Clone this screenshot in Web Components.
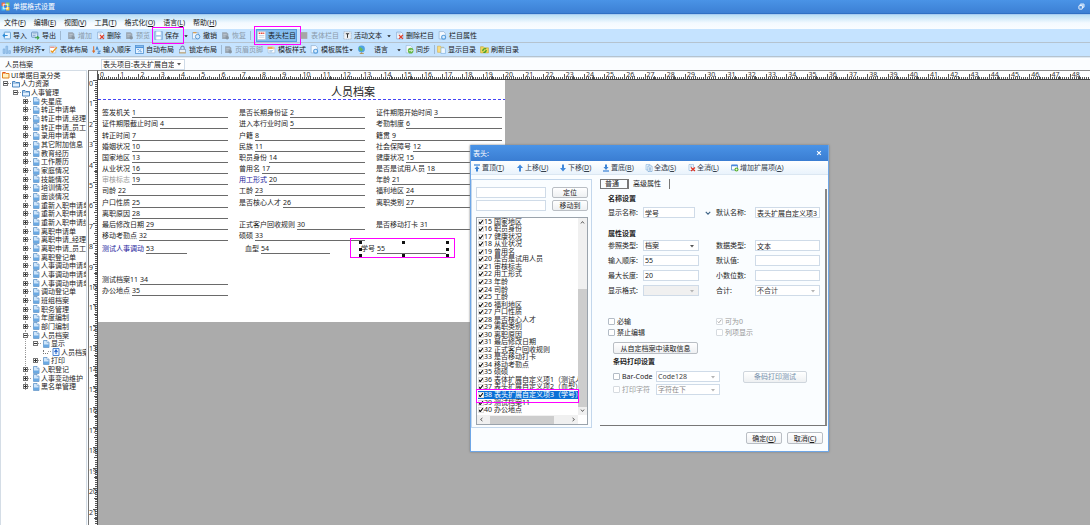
<!DOCTYPE html>
<html lang="zh-CN">
<head>
<meta charset="utf-8">
<title>单据格式设置</title>
<style>
html,body{margin:0;height:100%;overflow:hidden}
body{font:7px/9px "Noto Sans","Noto Sans CJK SC",sans-serif;color:#1c1c1c;background:#fbfdff}
</style>
</head>
<body>
<format-designer></format-designer>
<script>
const ICONS = {
  app:'<path d="M1 1h6v6H1z" fill="#f26a3d"/><path d="M9 1h6v6H9z" fill="#8fd14f"/><path d="M1 9h6v6H1z" fill="#45c2f5"/><path d="M9 9h6v6H9z" fill="#ffc928"/><path d="M4 4h8v8H4z" fill="none" stroke="#fff" stroke-width="1.5"/>',
  restore:'<rect x="5" y="2" width="9" height="8" rx="1" fill="#9cc7f5" stroke="#fff" stroke-width="1.5"/><rect x="2" y="6" width="8" height="8" rx="1" fill="#4a8fe0" stroke="#fff" stroke-width="2"/>',
  imp:'<rect x="4" y="2" width="11" height="12" rx="1" fill="#eaf5ff" stroke="#5d9bd0" stroke-width="1.5"/><path d="M10 8H2m3-3L2 8l3 3" fill="none" stroke="#2b8bd6" stroke-width="2"/>',
  exp:'<rect x="1" y="2" width="11" height="9" rx="1" fill="#dcecfb" stroke="#5b87b8" stroke-width="1.5"/><path d="M3 5h7M3 8h5" stroke="#5b87b8"/><path d="M7 12h7m-3-3 3 3-3 3" fill="none" stroke="#3fa53f" stroke-width="2"/>',
  gray:'<path d="M2 2h8l3 3v9H2z" fill="#9aa6b2"/><path d="M4 6h6M4 9h4" stroke="#d5dde5"/><circle cx="11" cy="12" r="3" fill="#8894a0"/>',
  block:'<path d="M1 2h12v12H1z" fill="#a6a6a6"/>',
  del:'<path d="M3 2h8l3 3v9H3z" fill="#f7fbff" stroke="#7ba3cc" stroke-width="1.2"/><path d="M7 7l7 7m0-7-7 7" stroke="#e0402d" stroke-width="2.2"/><path d="M5 5h5" stroke="#8eb3d8"/>',
  save:'<path d="M1 1h14v14H1z" fill="#a9cbee" stroke="#6e9ecf"/><path d="M4 1h8v6H4zM4 10h8v5H4z" fill="#fff"/>',
  undo:'<rect x="1" y="3" width="10" height="11" fill="#eef6ff" stroke="#8bb4dc" stroke-width="1.5"/><circle cx="10" cy="10" r="4" fill="#d9ebfb" stroke="#4b90d0" stroke-width="1.5"/><path d="M2 3h6" stroke="#e39a3b" stroke-width="2"/>',
  head:'<rect x="1" y="1" width="14" height="14" fill="#fff" stroke="#b9c6d4"/><path d="M3 4h10" stroke="#e64b3c" stroke-width="2.5" stroke-dasharray="3 1"/><path d="M3 8h10M3 11h10" stroke="#9bb3cb"/>',
  text:'<rect x="1.500" y="1.500" width="13" height="13" fill="#eef2f6" stroke="#8d99a5" stroke-dasharray="2 1"/><path d="M5 5h6M8 5v7" stroke="#333" stroke-width="1.8"/>',
  prop:'<path d="M2 1h8l3 3v10H2z" fill="#f4f9ff" stroke="#8badd0" stroke-width="1.2"/><circle cx="10" cy="11" r="3.500" fill="#dbeeff" stroke="#5a9fdc" stroke-width="2"/>',
  align:'<path d="M2 15V7h3v8zM7 15V2h3v13zM12 15v-5h3v5z" fill="#a6cdf0" stroke="#6ea3d6"/>',
  layout:'<path d="M1 2h11v12H1z" fill="#fff" stroke="#93a9c0"/><path d="M3 10l3 3 8-9" fill="none" stroke="#e99a27" stroke-width="2.4"/><path d="M2 4h8" stroke="#e05c4b" stroke-width="1.5"/>',
  order:'<path d="M3 2v11m-2-3 2 3 2-3" fill="none" stroke="#d96e2e" stroke-width="1.8"/><path d="M7 9l2-6 2 6M8 7h3M10 11h5l-5 4h5" fill="none" stroke="#3c7fc2" stroke-width="1.5"/>',
  auto:'<rect x="1" y="1" width="14" height="14" fill="#e5f2ff" stroke="#5895d2" stroke-width="1.5"/><path d="M1 4h14" stroke="#4a92dc" stroke-width="3"/><path d="M6 12l5-4M4 8h3M9 12h3" stroke="#4a92dc" stroke-width="1.5"/>',
  lock:'<path d="M5 8V5a3 3 0 0 1 6 0v3" fill="none" stroke="#6f8db0" stroke-width="1.8"/><rect x="3" y="8" width="10" height="6" fill="#e8f0f8" stroke="#6f8db0"/><path d="M2 14h12" stroke="#d4a04b" stroke-width="1.5"/>',
  style:'<path d="M2 6h12v8H2z" fill="#fff" stroke="#9ab3cc"/><path d="M1 3h9v4H1z" fill="#f0a850"/><path d="M9 2l5 2-2 5" fill="#f6ce8c"/><path d="M4 10h7M4 12h5" stroke="#6da2d7"/>',
  globe:'<circle cx="8" cy="7" r="6" fill="#4fa2e3"/><path d="M4 3c3 0 3 2 5 3s2 3-1 5C5 10 3 7 4 3z" fill="#68bb5a"/><path d="M5 15h7M8 13v2" stroke="#b08a4d" stroke-width="1.6"/>',
  sync:'<path d="M2 1h8l3 3v10H2z" fill="#f4f9ff" stroke="#8badd0"/><circle cx="10" cy="10" r="5" fill="#66b848"/><path d="M7 10h6m-2-2 2 2-2 2" stroke="#fff" stroke-width="1.3" fill="none"/>',
  dir:'<path d="M1 2h5l1 2h5v9H1z" fill="#f9dd82" stroke="#d3aa44"/><path d="M7 5h6l2 2v8H7z" fill="#eef7ff" stroke="#6fa5da"/>',
  fresh:'<path d="M1 3h5l2 2h7v9H1z" fill="#f2d65c" stroke="#c2a22f"/><path d="M5 11a4 4 0 0 1 6-4M11 9a4 4 0 0 1-5 4" fill="none" stroke="#43a12e" stroke-width="2.5"/>',
  root:'<path d="M1 3h5l2 2h6v9H1z" fill="#fff3c6" stroke="#e08320" stroke-width="2"/><path d="M2 2h5v3H2z" fill="#e8521e"/>',
  folder:'<path d="M1 3h5l2 2h7v9H1z" fill="#e2f1ff" stroke="#3f7dbb" stroke-width="1.8"/><path d="M1 6h14" stroke="#3f7dbb" stroke-width="1.500"/>',
  doc:'<path d="M3 1h7l4 4v10H3z" fill="#cfe6fb" stroke="#5a8fc4" stroke-width="1.5"/><path d="M10 1v4h4" fill="#fff" stroke="#5a8fc4"/><path d="M3 9h11v5H3z" fill="#6ba9e2"/>',
  page:'<path d="M2 1h12v14H2z" fill="#f0f7ff" stroke="#3a78d0" stroke-width="1.8"/><path d="M8 12V5M5 8l3-4 3 4" fill="none" stroke="#2563c9" stroke-width="2.2"/>',
  top:'<path d="M2 2h12" stroke="#3d84d6" stroke-width="2.500"/><path d="M8 4l5 6h-3v5H6v-5H3z" fill="#3d84d6"/>',
  up:'<path d="M8 1l6 7h-4v7H6V8H2z" fill="#4189dc"/>',
  down:'<path d="M8 15l6-7h-4V1H6v7H2z" fill="#4189dc"/>',
  bottom:'<path d="M2 14h12" stroke="#3d84d6" stroke-width="2.500"/><path d="M8 12l5-6h-3V1H6v5H3z" fill="#3d84d6"/>',
  all:'<path d="M2 1h8v11H2z" fill="#e4f1fd" stroke="#7aa9d6"/><path d="M6 4h8v11H6z" fill="#fff" stroke="#4f8bc7"/><path d="M8 8h4M10 7v6M8 12h4" stroke="#3b7cc0"/>',
  none:'<path d="M2 1h9v12H2z" fill="#fff" stroke="#6f9fce"/><path d="M4 4h5M4 6h4" stroke="#6f9fce"/><path d="M6 7l8 7m0-7-8 7" stroke="#e03424" stroke-width="2.500"/>',
  add:'<path d="M1 2h12v10H1z" fill="#fff" stroke="#4a88c5" stroke-width="1.5"/><path d="M1 3h12" stroke="#4a88e0" stroke-width="3"/><circle cx="11" cy="11" r="4" fill="#5cb231"/><path d="M11 9v4M9 11h4" stroke="#fff" stroke-width="1.3"/>',
  close:'<path d="M3 3l10 10M13 3L3 13" stroke="#fff" stroke-width="2.8"/>',
  chev:'<path d="M2 5l6 6 6-6" fill="none" stroke="#3f6486" stroke-width="3"/>',
  cup:'<path d="M3 11l5-6 5 6" fill="none" stroke="#333" stroke-width="2.5"/>',
  cdown:'<path d="M3 5l5 6 5-6" fill="none" stroke="#333" stroke-width="2.5"/>',
  cleft:'<path d="M11 3L5 8l6 5" fill="none" stroke="#333" stroke-width="2.5"/>',
  cright:'<path d="M5 3l6 5-6 5" fill="none" stroke="#333" stroke-width="2.5"/>',
  tri:'<path d="M1 5h14l-7 8z" fill="currentColor"/>'
};
function define(name, css, body) {
  customElements.define(name, class extends HTMLElement {
    constructor() { super(); this.attachShadow({mode:'open'}); }
    connectedCallback() {
      this.shadowRoot.innerHTML = '<style>*{box-sizing:border-box}' + css + '</style>' + (typeof body === 'function' ? body(this) : body);
    }
  });
}
const key = t => t.replace(/\((\w)\)/, '(<u>$1</u>)');

define('app-icon', ':host{display:block;flex:none;width:9px;height:9px}svg{display:block;width:100%;height:100%}',
  e => `<svg viewBox="0 0 16 16" aria-hidden="true">${ICONS[e.getAttribute('name')]}</svg>`);

define('title-bar', `:host{display:flex;align-items:center;gap:3px;height:15px;padding:0 5px 2px 1px;color:#fff;background:linear-gradient(#4a93e6,#3c80d4 13px,#2f70c4 13px,#2f70c4 14px,#a9cdf0 14px)}
  h1{margin:0;flex:1;font:inherit}button{all:unset;display:block}app-icon{height:9px}button app-icon{width:7px;height:7px}`,
  `<app-icon name="app"></app-icon><h1><slot></slot></h1><button aria-label="还原"><app-icon name="restore"></app-icon></button>`);

define('menu-bar', `:host{display:flex;gap:8px;align-items:center;height:14px;padding-left:4px;background:linear-gradient(#b9dff5,#f4faff 8px,#fafdff)}
  button{all:unset;white-space:nowrap}`,
  () => ['文件(F)','编辑(E)','视图(V)','工具(T)','格式化(O)','语言(L)','帮助(H)'].map(t => `<button>${key(t)}</button>`).join(''));

define('tool-bar', `:host{display:flex;align-items:center;gap:4px;height:14px;padding-left:2px;background:#c5e3ff;border-bottom:1px solid #b5c3cf}`, '<slot></slot>');
define('tool-sep', `:host{display:block;flex:none;width:var(--sep);height:9px;margin-right:-4px;border-left:1px solid #9fb9d2}`, '');
define('tool-item', `:host{display:block;flex:none;position:relative}
  button{all:unset;display:flex;align-items:center;gap:2px;height:11px;white-space:nowrap;color:#1c1c1c}
  :host([off]) button{color:#8b9aa9}
  :host([pressed]) button{background:#84bdf0;box-shadow:0 0 0 1px #5d9fdf}
  .drop{width:4px;height:4px;margin-left:-2px}
  :host([drop=wide]) .drop{margin-left:3px}
  :host([wide]) span{padding:0 4px 0 6px}
  :host([marked])::after{content:"";position:absolute;inset:-3px -4px -3px -2px;border:1px solid #f0f}
  :host([marked][drop])::after{right:4px}
  :host([marked][pressed])::after{inset:-4px -5px -4px -3px}`,
  e => `<button><app-icon name="${e.getAttribute('icon')}"></app-icon><span><slot></slot></span>${e.hasAttribute('drop') ? '<app-icon class="drop" name="tri"></app-icon>' : ''}</button>`);

const SEL_ARROW = c => `url("data:image/svg+xml,%3Csvg xmlns='http://www.w3.org/2000/svg' viewBox='0 0 8 8'%3E%3Cpath d='M0 2h8L4 7z' fill='%23${c}'/%3E%3C/svg%3E")`;
const CONTROLS = `
  input:not([type=checkbox]),select{box-sizing:border-box;width:100%;height:11px;margin:0;padding:0 1px;border:1px solid #cfdbe8;border-radius:0;background:#fff;font:inherit;color:#222;outline:0;display:block}
  select{appearance:none;padding:0 10px 0 1px;background:${SEL_ARROW('555')} right 4px center/4px 4px no-repeat #fff;text-overflow:clip}
  select:disabled{opacity:1;color:#444;background-image:${SEL_ARROW('b4b4b4')}}
  input[type=checkbox]{appearance:none;flex:none;width:7px;height:7px;margin:0;border:1px solid #b3bcc6;border-radius:1px;background:#fff}
  input[type=checkbox]:disabled{border-color:#d6dbe0}
  button{box-sizing:border-box;height:12px;padding:0;margin:0;border:1px solid #b9bec4;border-radius:2px;background:linear-gradient(#fff,#eef0f2);font:inherit;line-height:9px;color:#1c1c1c;white-space:nowrap}
  button:disabled{color:#7590ab;border-color:#cfd6dd}`;

define('context-bar', `:host{display:flex;align-items:center;height:13px;border-top:1px solid #dfe9f2;background:#fbfdff}
  label{width:101px;padding-left:5px}${CONTROLS}select{width:84px;background-position:right 3px center}`,
  `<label for="s">人员档案</label><select id="s"><option>表头项目:表头扩展自定</option></select>`);

const TREE = [[0,'root','UI单据目录分类'],[1,'folder','人力资源','-'],[2,'folder','人事管理','-']]
  .concat('失星底|转正申请单|转正申请_经理|转正申请_员工|录用申请单|其它附加信息|教育经历|工作履历|家庭情况|技能情况|培训情况|面谈情况|重新入职申请单|重新入职申请单|重新入职申请结|离职申请单|离职申请_经理|离职申请_员工|离职登记单|人事调动申请单|人事调动申请单|人事调动申请单|调动登记单|班组档案|职务管理|年度编制|部门编制'.split('|').map(t => [3,'doc',t,'+']))
  .concat([[3,'doc','人员档案','-'],[4,'doc','显示','-'],[5,'page','人员档案'],[4,'doc','打印','+'],[3,'doc','入职登记','+'],[3,'doc','人事变动维护','+'],[3,'doc','黑名单管理','+']]);
define('catalog-tree', `:host{display:block;overflow:hidden;background:#fff;border:1px solid #d4dde6;border-width:1px 1px 0 1px}
  ul{list-style:none;margin:0;padding:0;height:320px;display:flex;flex-direction:column}
  li{flex:1 0 0;min-height:0;display:flex;align-items:center;white-space:nowrap;padding-left:calc(var(--d)*10px - 8px);gap:1px}
  li.root{padding-left:1px}li.root .box{display:none}
  li.guide{background:repeating-linear-gradient(#999 0 1px,transparent 1px 2px) 24px 0/1px 100% no-repeat}
  .box{flex:none;width:5px;height:5px;border:1px solid #777;background:linear-gradient(#333,#333) center/3px 1px no-repeat #fff;position:relative;margin-right:3px}
  .plus{background:linear-gradient(#333,#333) center/3px 1px no-repeat,linear-gradient(#333,#333) center/1px 3px no-repeat #fff}
  .box::after{content:"";position:absolute;left:4px;top:1px;width:3px;border-top:1px dotted #999}
  .leaf{border-width:0 0 1px 1px;border-style:dotted;background:none;height:4px}
  app-icon{width:8px;height:8px}`,
  () => `<ul>${TREE.map(([d,i,t,s]) => `<li style="--d:${d}" class="${d ? '' : 'root'} ${d > 2 ? 'guide' : ''}"><span class="box ${s === '+' ? 'plus' : s ? '' : 'leaf'}"></span><app-icon name="${i}"></app-icon><span>${t}</span></li>`).join('')}</ul>`);

define('scale-ruler', `:host{display:grid;background:#fff;color:#333;overflow:hidden;line-height:8px}
  :host([dir=x]){height:10px;grid-template-columns:repeat(49,1fr);border-top:1px solid #8c8c8c;border-bottom:1px solid #444}
  :host([dir=y]){width:9px;margin-bottom:-4px;grid-template-rows:repeat(22,1fr);border-right:1px solid #444}
  span{overflow:visible;white-space:nowrap;font-size:7px}
  :host([dir=x]) span{padding-left:2px;background:linear-gradient(#555,#555) 0 100%/1px 5px no-repeat,linear-gradient(#555,#555) 50% 100%/1px 3px no-repeat,repeating-linear-gradient(90deg,#555 0 1px,transparent 1px 10%) 0 100%/100% 2px no-repeat}
  :host([dir=y]) span{background:linear-gradient(#555,#555) 100% 0/4px 1px no-repeat,linear-gradient(#555,#555) 100% 50%/3px 1px no-repeat,repeating-linear-gradient(#555 0 1px,transparent 1px 10%) 100% 0/2px 100% no-repeat}`,
  e => Array.from({length: e.getAttribute('dir') === 'x' ? 49 : 22}, (_, i) => `<span>${i}</span>`).join(''));

define('form-field', `:host{display:flex;align-items:flex-end;gap:2px;position:relative;min-height:0;white-space:nowrap}
  .v{flex:1;border-bottom:1px solid #6a6a6a;line-height:9px;color:#222}
  .l{padding-bottom:1px}
  :host([tone=blue]) .l{color:#1c1c9c}:host([tone=gray]) .l{color:#999}
  i{display:none}
  :host([selected]) i{display:block;position:absolute;width:3px;height:3px;background:#111}
  :host([selected])::after{content:"";position:absolute;inset:-6px -9px -4px -11px;border:1px solid #f0f}
  i:nth-of-type(3n+1){left:-2px}i:nth-of-type(3n+2){left:41px}i:nth-of-type(3n){right:-3px}
  i:nth-of-type(-n+3){top:-3px}i:nth-of-type(n+4){top:4px}i:nth-of-type(n+7){bottom:-3px;top:auto}
  i:nth-of-type(5){visibility:hidden}`,
  e => `<span class="l"><slot></slot></span><span class="v">${e.getAttribute('no')}</span>` + (e.hasAttribute('selected') ? '<i></i>'.repeat(9) : ''));

const F = (t, n, x = '') => `<form-field no="${n}" ${x}>${t}</form-field>`;
const ROWS = ['签发机关','是否长期身份证','证件期限开始时间','证件期限截止时间','进入本行业时间','考勤制度','转正时间','户籍','籍贯','婚姻状况','民族','社会保障号','国家地区','职员身份','健康状况','从业状况','曾用名','是否是试用人员','审核标志','用工形式','年龄','司龄','工龄','福利地区','户口性质','是否核心人才','离职类别','离职原因'];
define('form-page', `:host{display:block;width:407px;padding-bottom:26px;background:#fff}
  h2{margin:0 0 7px;height:20px;padding:2px 0 0 233px;font:11px/18px "Noto Sans CJK SC",sans-serif;color:#222;background:repeating-linear-gradient(90deg,#4444f4 0 3px,#fff 3px 5px) 0 100%/100% 1px no-repeat}
  .g{display:grid;grid-template-columns:repeat(3,126px);column-gap:11px;grid-template-rows:repeat(12,1fr);height:134px;padding-left:4px}
  .m{display:grid;grid-template-columns:143px 116px 85px;height:10px;margin:3px 0 20px;padding-left:4px}
  .m form-field{width:85px}
  .e{display:grid;grid-template-columns:126px;grid-auto-rows:11px;padding-left:4px}`,
  () => `<h2>人员档案</h2><div class="g">${ROWS.map((t,i) => F(t, i + 1, t === '审核标志' ? 'tone="gray"' : t === '用工形式' ? 'tone="blue"' : '')).join('')}<span></span><span></span>${F('最后修改日期',29)}${F('正式客户回收规则',30)}${F('是否移动打卡',31)}${F('移动考勤点',32)}${F('硕硕',33)}</div>
  <div class="m">${F('测试人事调动',53,'tone="blue"')}${F('血型',54)}${F('学号',55,'selected')}</div>
  <div class="e">${F('测试档案11',34)}${F('办公地点',35)}</div>`);

const CHECK = `url("data:image/svg+xml,%3Csvg xmlns='http://www.w3.org/2000/svg' viewBox='0 0 8 8'%3E%3Cpath d='M1 4l2 2 4-5' fill='none' stroke='%23111' stroke-width='1.6'/%3E%3C/svg%3E")`;
const ITEMS = '国家地区|职员身份|健康状况|从业状况|曾用名|是否是试用人员|审核标志|用工形式|年龄|司龄|工龄|福利地区|户口性质|是否核心人才|离职类别|离职原因|最后修改日期|正式客户回收规则|是否移动打卡|移动考勤点|硕硕|表体扩展自定义项1（测试人事）|表头扩展自定义项2（血型）|表头扩展自定义项3（学号）|测试档案11|办公地点'.split('|');
define('item-list', `:host{display:grid;grid-template-columns:1fr 9px;grid-template-rows:197px 9px;border:1px solid #9aa3ac;background:#fff}
  ul{list-style:none;margin:0;padding:0 0 1px 1px;display:flex;flex-direction:column;min-width:0;overflow:hidden}
  li{flex:1 0 0;min-height:0;display:flex;align-items:center}
  label{display:flex;align-items:center;white-space:nowrap;line-height:8px}
  input{appearance:none;flex:none;width:6px;height:6px;margin:0;background:${CHECK} center/6px 6px no-repeat,#fff;outline:1px solid #ddd;outline-offset:-1px}
  .n{flex:none;width:10px}
  .on label{background:#0a6fd6;color:#fff}
  .wrap{position:relative;min-width:0;display:grid}
  .wrap::after{content:"";position:absolute;left:-1px;right:-1px;top:171px;height:12px;border:1px solid #f0f}
  .v,.h{background:#f0f0f0;display:flex;align-items:center;justify-content:space-between}
  .v{flex-direction:column;padding:2px 0}.h{padding:0 2px}
  .v::after{content:"";order:1;width:9px;height:118px;background:#cdcdcd;margin-top:62px}.v app-icon:last-of-type{order:2}
  .h::after{content:"";order:1;width:64px;height:8px;background:#cdcdcd;margin-right:12px}.h app-icon:last-of-type{order:2}
  .v app-icon,.h app-icon{width:5px;height:5px}`,
  () => `<div class="wrap"><ul>${ITEMS.map((t,i) => `<li class="${i === 23 ? 'on' : ''}"><label><input type="checkbox" checked><span class="n">${i + 15}</span><span>${t}</span></label></li>`).join('')}</ul></div>
  <div class="v"><app-icon name="cup"></app-icon><app-icon name="cdown"></app-icon></div><div class="h"><app-icon name="cleft"></app-icon><app-icon name="cright"></app-icon></div>`);

define('find-pane', `:host{display:block;width:121px;padding:7px 3px 2px 4px;border:1px solid #c3d7ec}${CONTROLS}
  .r{display:grid;grid-template-columns:70px 36px;justify-content:space-between;gap:2px;margin-bottom:6px}button{height:11px}`,
  `<div class="r"><input aria-label="定位"><button>定位</button><input aria-label="移动到"><button>移动到</button></div><item-list></item-list>`);

define('attribute-pane', `:host{display:block;color:#1c1c1c}${CONTROLS}
  nav{display:flex;height:10px}nav button{height:10px;border:0;border-radius:0;background:none;border-right:1px solid #777;width:41px;line-height:8px;text-align:left;padding-left:4px}
  nav button:first-child{width:29px;border:1px solid #777;border-right-width:2px;padding-left:4px}
  .p{height:237px;padding:4px 0 0 8px;border-right:2px solid #888;border-bottom:1px solid #777}
  h3{margin:0;font:bold 7px/11px "Noto Sans","Noto Sans CJK SC",sans-serif}
  .f{display:grid;grid-template-columns:35px 56px 17px 39px 65px;grid-auto-rows:11px;row-gap:4px;align-items:center}
  .f.a{margin:3px 0 10px}.f.a input#n{width:52px}.f.b{margin:1px 0 20px}
  .f app-icon{width:6px;height:6px;justify-self:center}
  #fmt{background-color:#f0f0f0}
  .c{display:grid;grid-template-columns:108px 1fr;grid-auto-rows:11px}
  .c label,.k label{display:flex;align-items:center;gap:2px;white-space:nowrap}
  .off{color:#999}.off input{background:${CHECK.replace('%23111','%23aaa')} center/5px 5px no-repeat,#fff}.off .un{background:#fff!important}
  .in{margin:4px 0 0 5px}.in>button{width:85px;display:block;margin-bottom:2px}
  .k{display:grid;grid-template-columns:43px 64px 87px;row-gap:2px;margin-top:4px;grid-auto-rows:11px;align-items:center}
  .k button{margin-left:23px}.k .dim{color:#888}`,
  `<nav><button>普通</button><button>高级属性</button></nav><div class="p">
  <h3>名称设置</h3><div class="f a"><label for="n">显示名称:</label><input id="n" value="学号"><app-icon name="chev"></app-icon><label for="m">默认名称:</label><input id="m" value="表头扩展自定义项3"></div>
  <h3>属性设置</h3><div class="f b">
  <label for="t">参照类型:</label><select id="t"><option>档案</option></select><span></span><label for="d">数据类型:</label><input id="d" value="文本">
  <label for="o">输入顺序:</label><input id="o" value="55"><span></span><label for="v">默认值:</label><input id="v">
  <label for="l">最大长度:</label><input id="l" value="20"><span></span><label for="x">小数位数:</label><input id="x">
  <label for="fmt">显示格式:</label><select id="fmt" disabled><option></option></select><span></span><label for="s">合计:</label><select id="s" disabled><option>不合计</option></select></div>
  <div class="c"><label><input type="checkbox">必输</label><label class="off"><input type="checkbox" checked disabled>可为0</label><label><input type="checkbox">禁止编辑</label><label class="off"><input class="un" type="checkbox" disabled>列项显示</label></div>
  <div class="in"><button>从自定档案中读取信息</button><h3>条码打印设置</h3><div class="k"><label><input type="checkbox">Bar-Code</label><select aria-label="条码类型" disabled><option>Code128</option></select><button disabled>条码打印测试</button><label class="off"><input class="un" type="checkbox" disabled>打印字符</label><select class="dim" aria-label="字符位置" disabled><option>字符在下</option></select></div></div></div>`);

define('header-dialog', `:host{display:block;width:359px;border:1px solid #6ea6e6;border-top:0;background:#fafdff;box-shadow:0 0 2px #777}
  header{display:flex;align-items:center;justify-content:space-between;height:16px;padding:0 6px 0 2px;color:#fff;background:linear-gradient(#4a93e6,#3a7dd2)}
  header button{all:unset;display:block}header app-icon{width:6px;height:6px}
  .t{display:grid;grid-template-columns:repeat(6,43px) 60px;align-items:center;height:14px;padding-left:2px;background:linear-gradient(#fff,#e9f3fc);border-bottom:1px solid #dbe7f2;color:#34404d}
  .t button{all:unset;display:flex;align-items:center;gap:1px;white-space:nowrap}.t app-icon{width:8px;height:8px}
  main{display:grid;grid-template-columns:121px 227px;column-gap:8px;padding-top:4px}
  footer{display:flex;justify-content:flex-end;gap:5px;padding:4px 5px 7px}${CONTROLS.slice(CONTROLS.indexOf('button{')).replace(/^button\{/,'footer button{width:36px;')}`,
  () => `<header><span>表头:</span><button aria-label="关闭"><app-icon name="close"></app-icon></button></header>
  <div class="t">${[['top','置顶(T)'],['up','上移(U)'],['down','下移(D)'],['bottom','置底(B)'],['all','全选(S)'],['none','全消(L)'],['add','增加扩展项(A)']].map(([i,t]) => `<button><app-icon name="${i}"></app-icon><span>${key(t)}</span></button>`).join('')}</div>
  <main><find-pane></find-pane><attribute-pane></attribute-pane></main><footer><button>${key('确定(O)')}</button><button>${key('取消(C)')}</button></footer>`);

const T = (i, t, x = '') => `<tool-item icon="${i}" ${x}>${t}</tool-item>`, S = '<tool-sep></tool-sep>';
define('format-designer', `:host{display:flex;flex-direction:column;height:100vh;position:relative;overflow:hidden}
  .r1{--sep:7px}.r2{--sep:3px}
  .w{flex:1;min-height:0;display:grid;grid-template-columns:87px minmax(0,1fr);column-gap:1px}
  .d{display:grid;grid-template-columns:9px minmax(0,1fr);grid-template-rows:10px minmax(0,1fr);border-left:1px solid #777;min-height:0}
  .k{border-top:1px solid #8c8c8c;border-right:1px solid #555;background:#fff}
  .s{background:#ababab;overflow:hidden}
  header-dialog{position:absolute;left:470px;top:145px}`,
  () => `<title-bar>单据格式设置</title-bar><menu-bar></menu-bar>
  <tool-bar class="r1">${T('imp','导入')}${T('exp','导出')}${S}${T('gray','增加','off')}${T('del','删除')}${T('gray','预览','off')}${T('save','保存','drop="wide" marked')}${T('undo','撤销')}${T('gray','恢复','off')}${S}${T('head','表头栏目','pressed marked')}${T('block','表体栏目','off')}${T('text','活动文本','drop="wide"')}${T('del','删除栏目')}${T('prop','栏目属性')}</tool-bar>
  <tool-bar class="r2">${T('align','排列对齐','drop')}${T('layout','表体布局')}${T('order','输入顺序')}${T('auto','自动布局')}${T('lock','锁定布局')}${S}${T('gray','页眉页脚','off')}${T('style','模板样式')}${T('prop','模板属性','drop')}${T('globe','语言','drop="wide" wide')}${T('sync','同步')}${S}${T('dir','显示目录')}${T('fresh','刷新目录')}</tool-bar>
  <context-bar></context-bar>
  <div class="w"><catalog-tree></catalog-tree><div class="d"><div class="k"></div><scale-ruler dir="x"></scale-ruler><scale-ruler dir="y"></scale-ruler><div class="s"><form-page></form-page></div></div></div>
  <header-dialog></header-dialog>`);
</script>
</body>
</html>
